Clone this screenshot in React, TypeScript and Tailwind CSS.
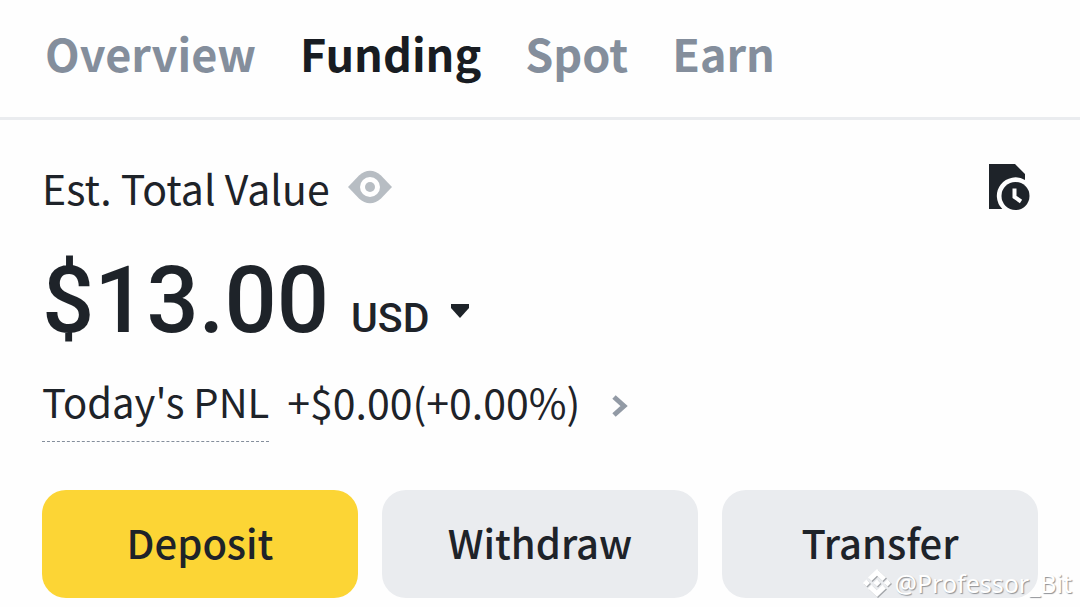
import { useState } from 'react';

const tabs = ['Overview', 'Funding', 'Spot', 'Earn'];

const actions = [
  { label: 'Deposit', className: 'bg-[#fcd535]' },
  { label: 'Withdraw', className: 'bg-[#eaecef]' },
  { label: 'Transfer', className: 'bg-[#eaecef]' },
];

function EyeIcon() {
  return (
    <svg width="44" height="34" viewBox="0 0 44 34" aria-hidden="true">
      <path d="M0 17 L11 5.5 C17.5 -0.9 26.5 -0.9 33 5.5 L44 17 L33 28.5 C26.5 34.9 17.5 34.9 11 28.5 Z" fill="#b7bdc3" />
      <circle cx="22" cy="17" r="10" fill="#fff" />
      <circle cx="22" cy="17" r="5" fill="#b7bdc3" />
    </svg>
  );
}

function HistoryIcon() {
  return (
    <svg width="42" height="48" viewBox="0 0 42 48" aria-hidden="true">
      <path d="M1 1 H27 L37 11 V17.1 A18.5 18.5 0 0 0 14.3 46 H1 Z" fill="#1e2329" />
      <circle cx="27.5" cy="33" r="14" fill="#1e2329" />
      <path d="M26.5 25.5 V34 L33 38.5" fill="none" stroke="#fff" strokeWidth="4" />
    </svg>
  );
}

function BrandMark() {
  return (
    <svg width="28" height="30" viewBox="0 0 28 30" className="drop-shadow-[1px_1px_0_#a3a6aa]" aria-hidden="true">
      <g fill="#fff">
        <path d="M14 1 L23 9.5 L19.5 13 L14 7.7 L8.5 13 L5 9.5 Z" />
        <path d="M14 29 L23 20.5 L19.5 17 L14 22.3 L8.5 17 L5 20.5 Z" />
        <path d="M14 11.5 L17.5 15 L14 18.5 L10.5 15 Z" />
        <path d="M3.5 11.5 L7 15 L3.5 18.5 L0 15 Z" />
        <path d="M24.5 11.5 L28 15 L24.5 18.5 L21 15 Z" />
      </g>
    </svg>
  );
}

export default function App() {
  const [activeTab, setActiveTab] = useState('Funding');

  return (
    <div className="relative min-h-screen bg-[#fefefe] font-['Noto_Sans_CJK_SC',sans-serif] text-[#1e2329]">
      <nav className="flex gap-11 border-b-3 border-[#eaecef] px-[45px] pt-[17px] pb-7">
        {tabs.map((tab) => (
          <button
            key={tab}
            type="button"
            onClick={() => setActiveTab(tab)}
            className={`text-[45px] leading-[72px] font-bold ${tab === activeTab ? 'text-[#181c22]' : 'text-[#848e9c]'}`}
          >
            {tab}
          </button>
        ))}
      </nav>

      <main className="px-[42px] pt-[39px] pb-2">
        <div className="flex h-14 items-center justify-between">
          <div className="flex items-center gap-[18px]">
            <h1 className="text-[41px] leading-14">Est. Total Value</h1>
            <button type="button" aria-label="Hide balance">
              <EyeIcon />
            </button>
          </div>
          <button type="button" aria-label="History" className="mr-2">
            <HistoryIcon />
          </button>
        </div>

        <div className="mt-[38px] flex items-baseline gap-[22px] font-[Roboto,sans-serif]">
          <span className="text-[92px] leading-24 font-medium">$13.00</span>
          <button type="button" className="flex items-start gap-[22px] text-[41px] leading-12 font-medium">
            USD
            <svg width="18" height="14" viewBox="0 0 18 14" className="mt-2.5" aria-hidden="true">
              <path d="M0 0 H18 V4 L9 14 L0 4 Z" fill="#1e2329" />
            </svg>
          </button>
        </div>

        <a href="#pnl" className="mt-[22px] flex items-start text-[41px] leading-15">
          <span className="border-b border-dashed border-[#848e9c] pb-[10px] text-[40px]">Today's PNL</span>
          <span className="ml-[18px]">+$0.00(+0.00%)</span>
          <svg width="16" height="22" viewBox="0 0 16 22" className="mt-6 ml-8" aria-hidden="true">
            <path d="M2 2 L12 11 L2 20" fill="none" stroke="#929aa5" strokeWidth="5" />
          </svg>
        </a>

        <div className="mt-12 grid grid-cols-3 gap-6">
          {actions.map((action) => (
            <button
              key={action.label}
              type="button"
              className={`h-27 rounded-3xl pb-1 text-[40px] font-medium ${action.className}`}
            >
              {action.label}
            </button>
          ))}
        </div>
      </main>

      <div className="absolute right-2 bottom-2 flex items-center gap-1 font-['Noto_Sans',sans-serif] text-[25px] leading-8 text-white">
        <BrandMark />
        <span className="[text-shadow:1px_1px_1px_#8f9296]">@Professor_Bit</span>
      </div>
    </div>
  );
}
